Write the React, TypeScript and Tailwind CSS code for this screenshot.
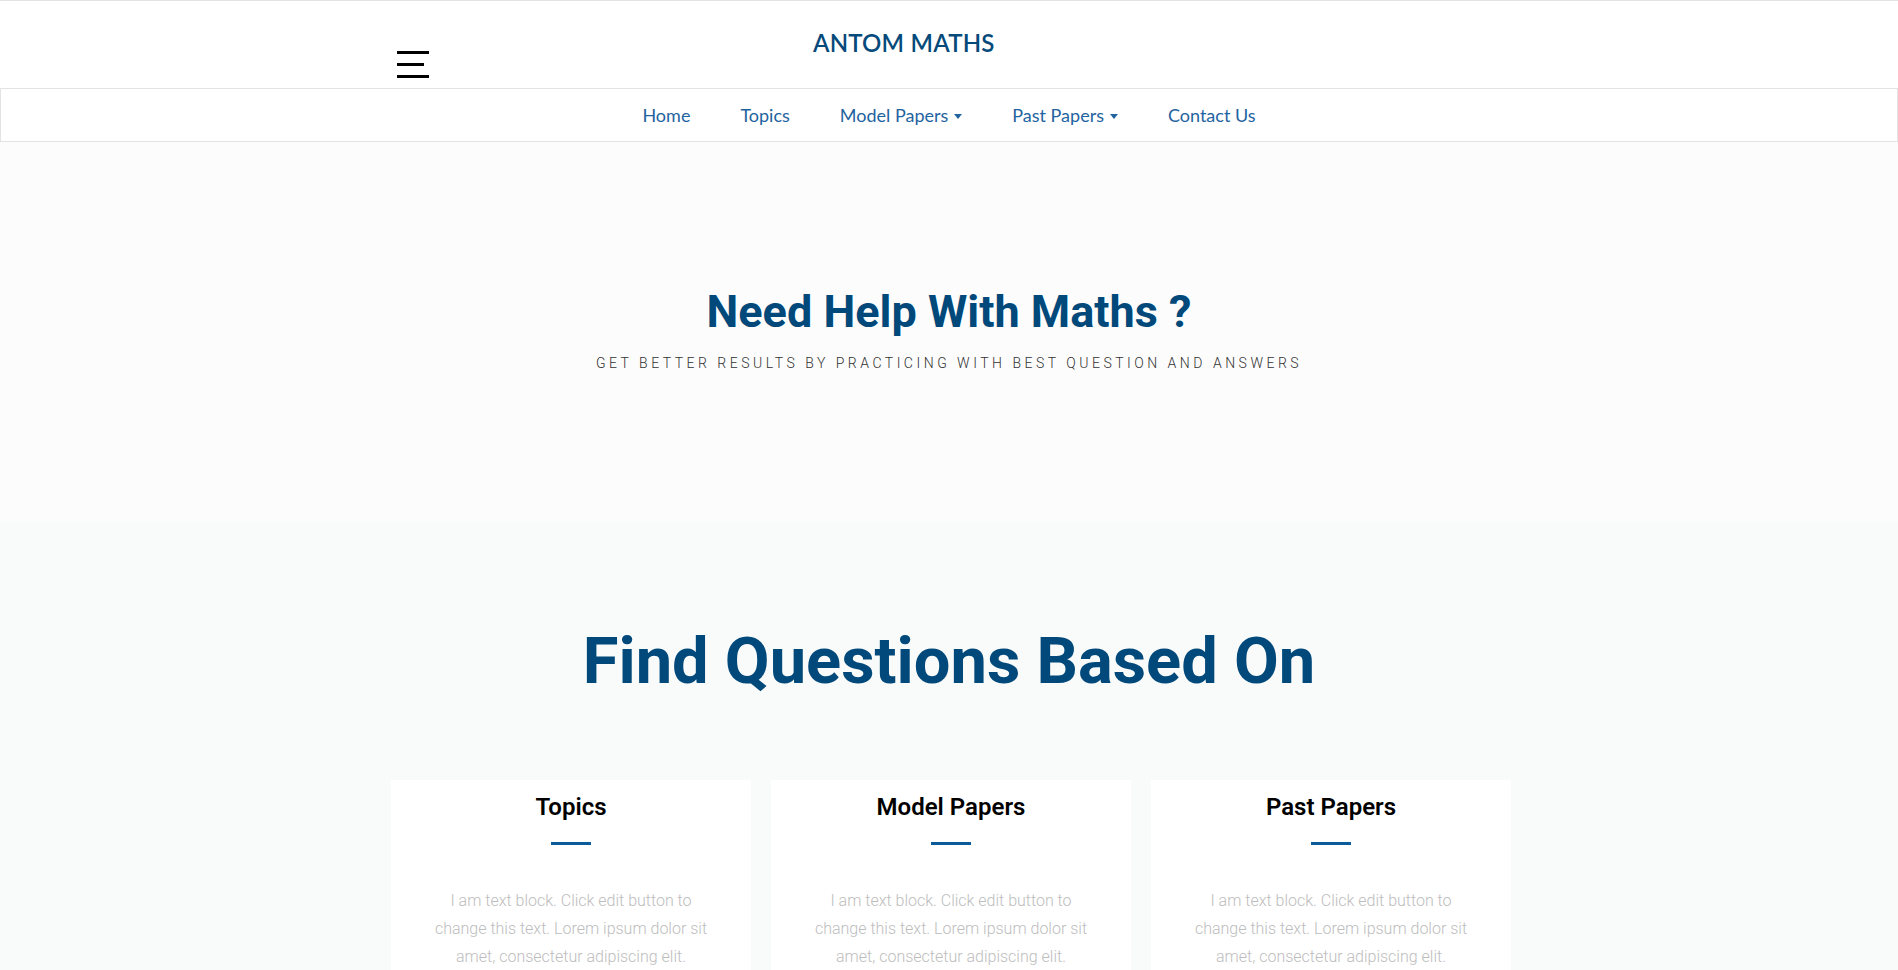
import React from 'react'

const navItems = [
  { label: 'Home', caret: false },
  { label: 'Topics', caret: false },
  { label: 'Model Papers', caret: true },
  { label: 'Past Papers', caret: true },
  { label: 'Contact Us', caret: false },
]

const cards = ['Topics', 'Model Papers', 'Past Papers']

const blurb =
  'I am text block. Click edit button to change this text. Lorem ipsum dolor sit amet, consectetur adipiscing elit.'

const Caret = () => (
  <svg width="8" height="5" viewBox="0 0 8 5" className="ml-[6px] mt-[2px] inline-block">
    <path d="M0 0h8L4 5z" fill="currentColor" />
  </svg>
)

export default function App() {
  return (
    <div className="min-h-screen bg-[#f9fafa] font-['Roboto',sans-serif]">
      {/* header */}
      <header className="border-t border-b border-[#e3e3e3] bg-white">
        <div className="mx-auto flex h-[87px] w-[1140px] items-start">
          <button className="ml-[18px] mt-[50px] flex w-[32px] flex-col gap-[9px]" aria-label="menu">
            <span className="block h-[3px] w-[32px] bg-black" />
            <span className="block h-[3px] w-[27px] bg-black" />
            <span className="block h-[3px] w-[32px] bg-black" />
          </button>
          <div className="ml-[384px] mt-[24px] font-['Lato',sans-serif] text-[24px] font-semibold tracking-[0.2px] text-[#054a7b]">
            ANTOM MATHS
          </div>
        </div>
      </header>

      {/* nav */}
      <nav className="border border-t-0 border-[#e3e3e3] bg-white">
        <ul className="flex h-[52px] items-center justify-center font-['Lato',sans-serif] text-[18px] text-[#1f63a0]">
          {navItems.map((item) => (
            <li key={item.label} className="flex items-center px-[25px]">
              {item.label}
              {item.caret && <Caret />}
            </li>
          ))}
        </ul>
      </nav>

      {/* hero */}
      <section className="flex h-[380px] flex-col items-center justify-center bg-[#fcfcfc] pb-[6px]">
        <h1 className="text-[45px] font-bold leading-[54px] text-[#00497a]">Need Help With Maths ?</h1>
        <p className="mt-[14px] text-[14px] font-light uppercase tracking-[3.5px] text-[#333]">
          Get better results by practicing with best question and answers
        </p>
      </section>

      {/* find questions */}
      <section className="pt-[107px] pb-[60px]">
        <h2 className="text-center text-[65px] font-bold leading-none text-[#00497a]">
          Find Questions Based On
        </h2>
        <div className="mx-auto mt-[86px] grid w-[1124px] grid-cols-3 gap-[20px] pl-[4px]">
          {cards.map((title) => (
            <div key={title} className="flex flex-col items-center bg-white px-[40px] pt-[9px] pb-[40px]">
              <h3 className="text-[24px] font-semibold leading-[36px] text-black">{title}</h3>
              <div className="mt-[17px] h-[3px] w-[40px] bg-[#0b5a9a]" />
              <p className="mt-[42px] text-center text-[16px] font-light leading-[28px] text-[#bdbdbd]">
                {blurb}
              </p>
            </div>
          ))}
        </div>
      </section>
    </div>
  )
}
